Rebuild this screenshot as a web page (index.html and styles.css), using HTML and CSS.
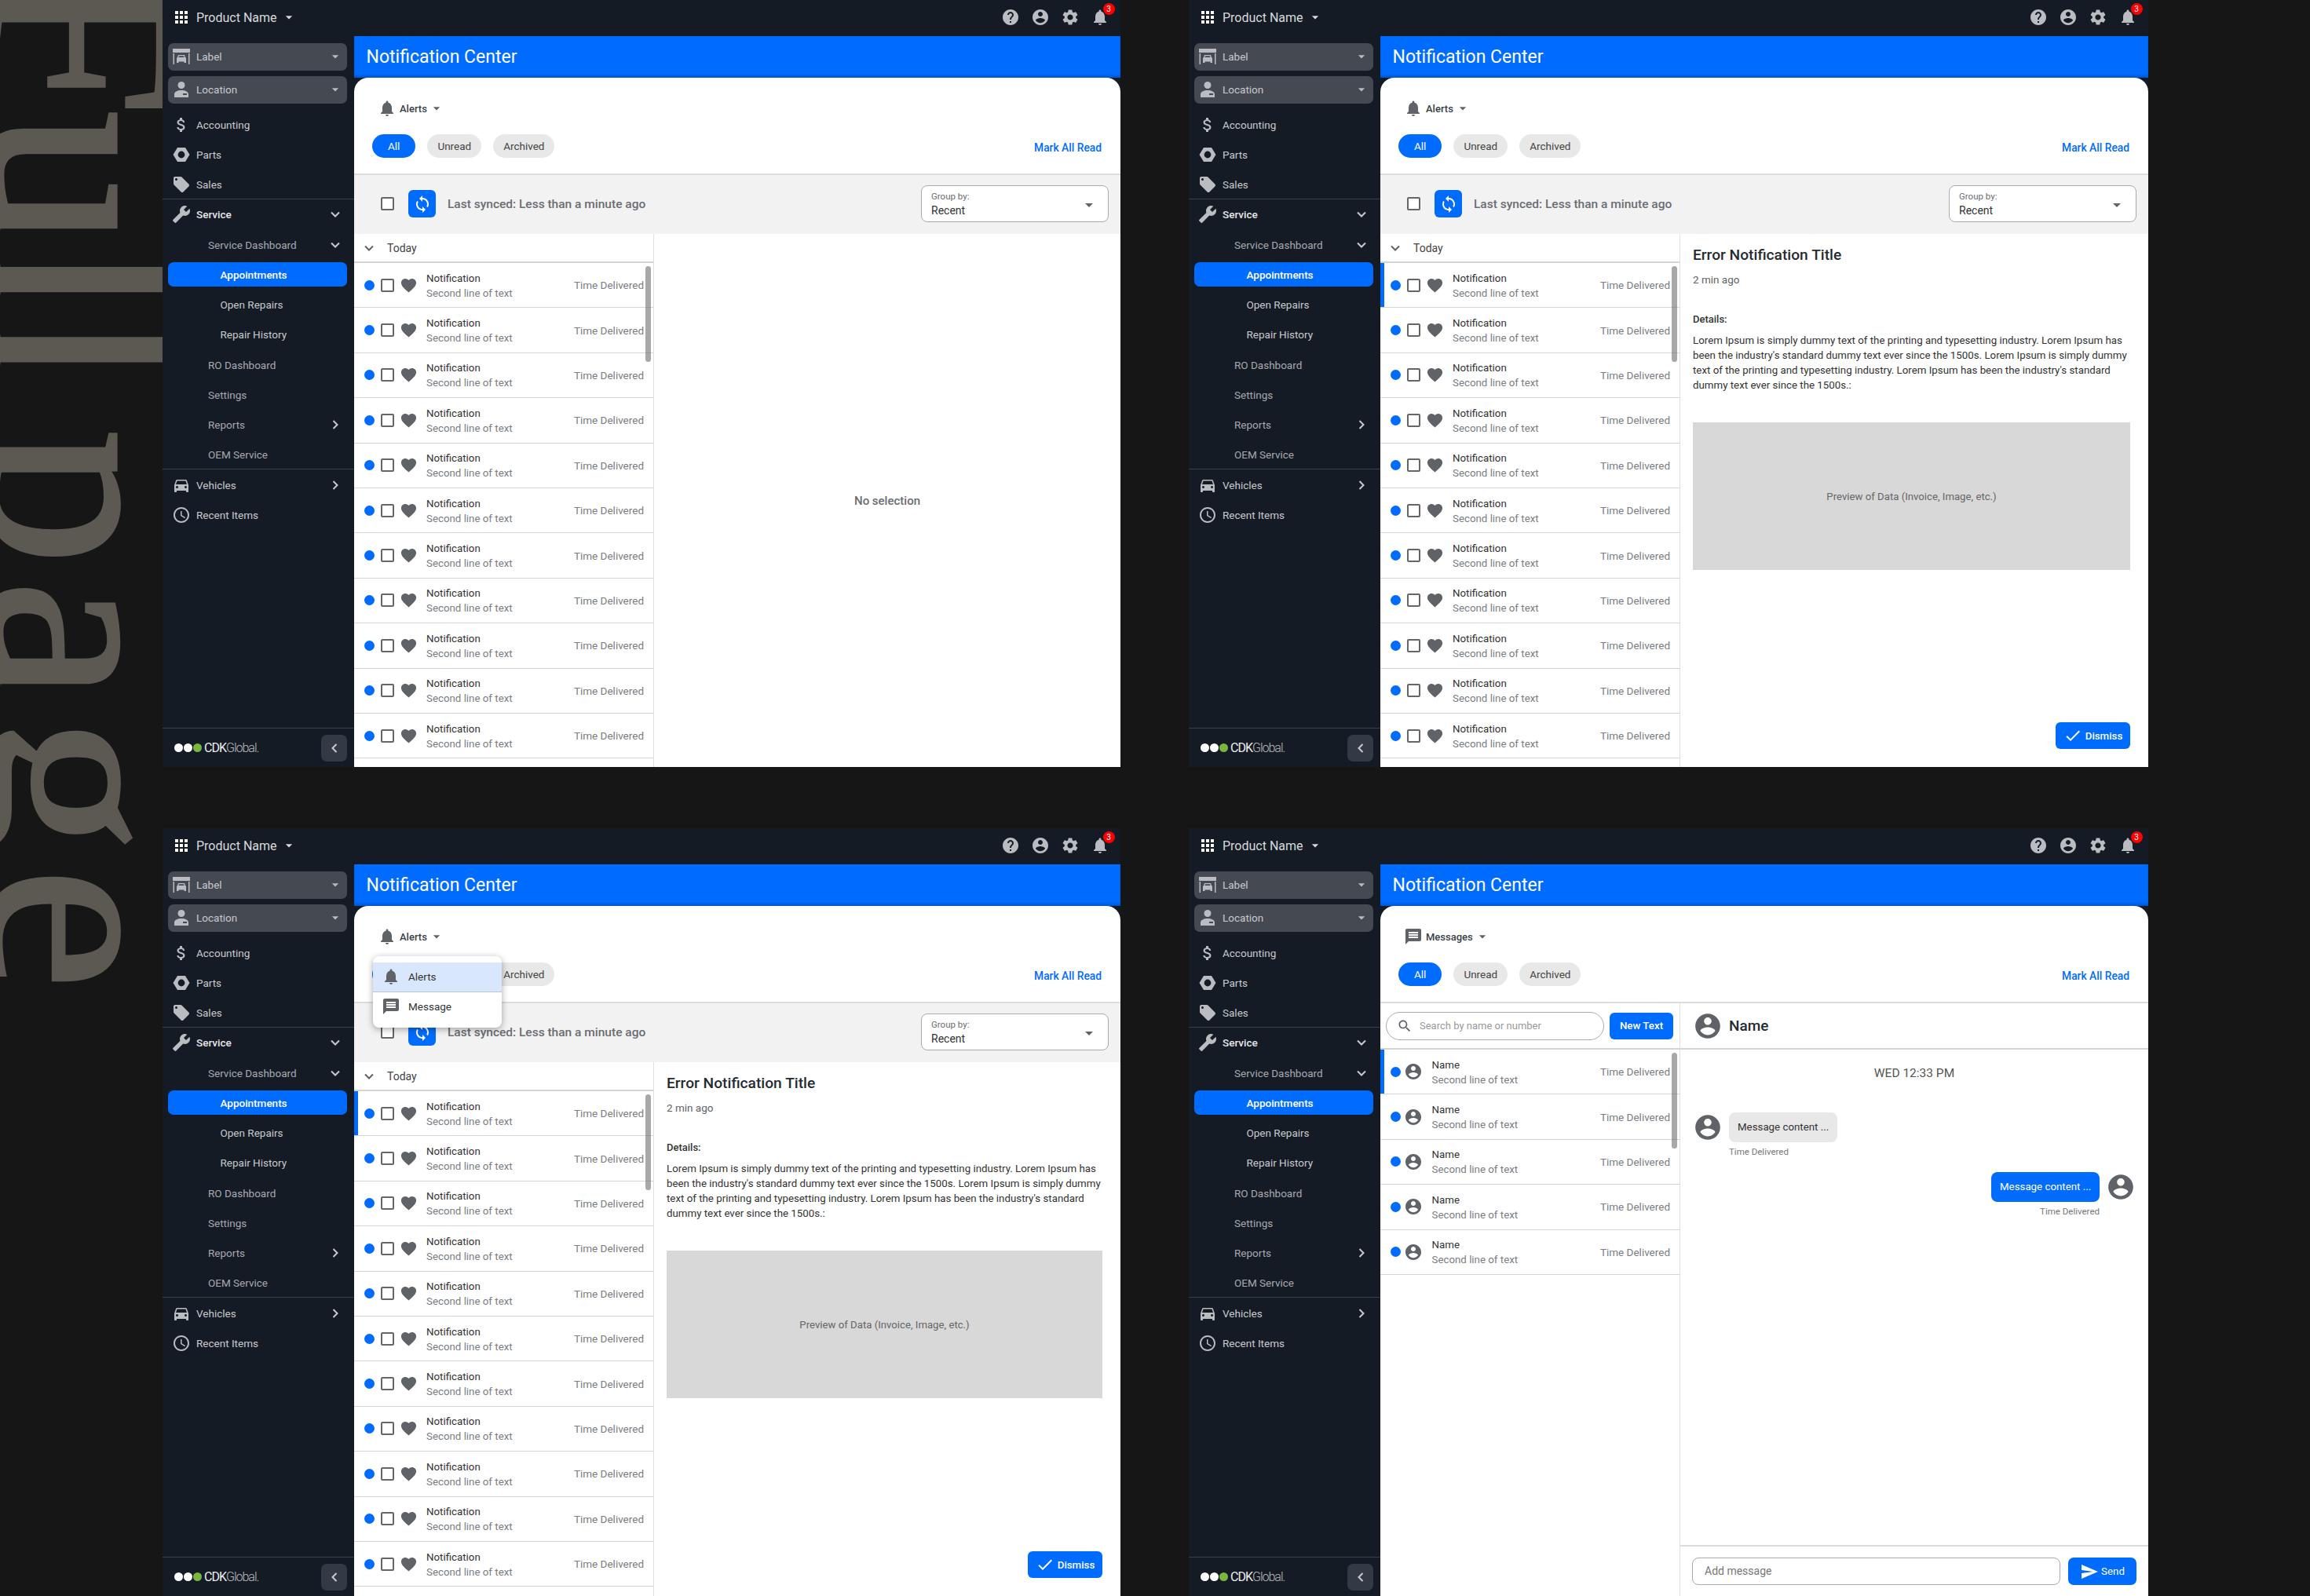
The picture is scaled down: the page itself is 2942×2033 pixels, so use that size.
FILE: index.html
```html
<!DOCTYPE html>
<html lang="en">
<head>
    <meta charset="UTF-8">
    <title>Notification Center - Full page</title>
    <link rel="stylesheet" href="styles.css">
</head>
<body>
    <svg class="icon-defs" xmlns="http://www.w3.org/2000/svg">
        <symbol id="i-apps" viewBox="0 0 24 24"><path d="M4 8h4V4H4v4zm6 12h4v-4h-4v4zm-6 0h4v-4H4v4zm0-6h4v-4H4v4zm6 0h4v-4h-4v4zm6-10v4h4V4h-4zm-6 4h4V4h-4v4zm6 6h4v-4h-4v4zm0 6h4v-4h-4v4z"/></symbol>
        <symbol id="i-caret" viewBox="0 0 24 24"><path d="M7 10l5 5 5-5z"/></symbol>
        <symbol id="i-down" viewBox="0 0 24 24"><path d="M6 9l6 6 6-6" fill="none" stroke="currentColor" stroke-width="2.4"/></symbol>
        <symbol id="i-right" viewBox="0 0 24 24"><path d="M9 6l6 6-6 6" fill="none" stroke="currentColor" stroke-width="2.4"/></symbol>
        <symbol id="i-left" viewBox="0 0 24 24"><path d="M15 6l-6 6 6 6" fill="none" stroke="currentColor" stroke-width="2.4"/></symbol>
        <symbol id="i-help" viewBox="0 0 24 24"><path d="M12 2C6.48 2 2 6.48 2 12s4.48 10 10 10 10-4.48 10-10S17.52 2 12 2zm1 17h-2v-2h2v2zm2.07-7.75l-.9.92C13.45 12.9 13 13.5 13 15h-2v-.5c0-1.1.45-2.1 1.17-2.83l1.24-1.26c.37-.36.59-.86.59-1.41 0-1.1-.9-2-2-2s-2 .9-2 2H8c0-2.21 1.79-4 4-4s4 1.79 4 4c0 .88-.36 1.68-.93 2.25z"/></symbol>
        <symbol id="i-account" viewBox="0 0 24 24"><path d="M12 2C6.48 2 2 6.48 2 12s4.48 10 10 10 10-4.48 10-10S17.52 2 12 2zm0 3c1.66 0 3 1.34 3 3s-1.34 3-3 3-3-1.34-3-3 1.34-3 3-3zm0 14.2c-2.5 0-4.71-1.28-6-3.22.03-1.99 4-3.08 6-3.08 1.99 0 5.97 1.09 6 3.08-1.29 1.94-3.5 3.22-6 3.22z"/></symbol>
        <symbol id="i-gear" viewBox="0 0 24 24"><path d="M19.14 12.94c.04-.3.06-.61.06-.94 0-.32-.02-.64-.07-.94l2.03-1.58c.18-.14.23-.41.12-.61l-1.92-3.32c-.12-.22-.37-.29-.59-.22l-2.39.96c-.5-.38-1.03-.7-1.62-.94l-.36-2.54c-.04-.24-.24-.41-.48-.41h-3.84c-.24 0-.43.17-.47.41l-.36 2.54c-.59.24-1.13.57-1.62.94l-2.39-.96c-.22-.08-.47 0-.59.22L2.74 8.87c-.12.21-.08.47.12.61l2.03 1.58c-.05.3-.09.63-.09.94s.02.64.07.94l-2.03 1.58c-.18.14-.23.41-.12.61l1.92 3.32c.12.22.37.29.59.22l2.39-.96c.5.38 1.03.7 1.62.94l.36 2.54c.05.24.24.41.48.41h3.84c.24 0 .44-.17.47-.41l.36-2.54c.59-.24 1.13-.56 1.62-.94l2.39.96c.22.08.47 0 .59-.22l1.92-3.32c.12-.22.07-.47-.12-.61l-2.01-1.58zM12 15.6c-1.98 0-3.6-1.62-3.6-3.6s1.62-3.6 3.6-3.6 3.6 1.62 3.6 3.6-1.62 3.6-3.6 3.6z"/></symbol>
        <symbol id="i-bell" viewBox="0 0 24 24"><path d="M12 22c1.1 0 2-.9 2-2h-4c0 1.1.89 2 2 2zm6-6v-5c0-3.07-1.64-5.64-4.5-6.32V4c0-.83-.67-1.5-1.5-1.5s-1.5.67-1.5 1.5v.68C7.63 5.36 6 7.92 6 11v5l-2 2v1h16v-1l-2-2z"/></symbol>
        <symbol id="i-store" viewBox="0 0 24 24"><path d="M1 2h22v5H1zM1.5 8H3v14H1.5zM21 8h1.5v14H21z"/><path d="M7 13l1-3h8l1 3 1 1v6h-2.5v-1.5h-7V20H6v-6zM8.4 13h7.2l-.6-1.7H9z" fill-rule="evenodd"/></symbol>
        <symbol id="i-person" viewBox="0 0 24 24"><circle cx="12" cy="6.5" r="4.5"/><path d="M3 22v-4c0-3 4-5 9-5s9 2 9 5v4zm11-5v2h5v-2z" fill-rule="evenodd"/></symbol>
        <symbol id="i-dollar" viewBox="0 0 24 24"><path d="M11.8 10.9c-2.27-.59-3-1.2-3-2.15 0-1.09 1.01-1.85 2.7-1.85 1.78 0 2.44.85 2.5 2.1h2.21c-.07-1.72-1.12-3.3-3.21-3.81V3h-3v2.16c-1.94.42-3.5 1.68-3.5 3.61 0 2.31 1.91 3.46 4.7 4.13 2.5.6 3 1.48 3 2.41 0 .69-.49 1.79-2.7 1.79-2.06 0-2.87-.92-2.98-2.1h-2.2c.12 2.19 1.76 3.42 3.68 3.83V21h3v-2.15c1.95-.37 3.5-1.5 3.5-3.55 0-2.84-2.43-3.81-4.7-4.4z"/></symbol>
        <symbol id="i-nut" viewBox="0 0 24 24"><path d="M7 3h10l5.5 9-5.5 9H7l-5.5-9zM12 7.6a4.4 4.4 0 1 0 0 8.8 4.4 4.4 0 0 0 0-8.8z" fill-rule="evenodd"/></symbol>
        <symbol id="i-tag" viewBox="0 0 24 24"><path d="M21.41 11.58l-9-9C12.05 2.22 11.55 2 11 2H4c-1.1 0-2 .9-2 2v7c0 .55.22 1.05.59 1.42l9 9c.36.36.86.58 1.41.58.55 0 1.05-.22 1.41-.59l7-7c.37-.36.59-.86.59-1.41 0-.55-.23-1.06-.59-1.42zM5.5 7C4.67 7 4 6.33 4 5.5S4.67 4 5.5 4 7 4.67 7 5.5 6.33 7 5.5 7z"/></symbol>
        <symbol id="i-wrench" viewBox="0 0 24 24"><path transform="matrix(-1 0 0 1 24 0)" d="M22.7 19l-9.1-9.1c.9-2.3.4-5-1.5-6.9-2-2-5-2.4-7.4-1.3L9 6 6 9 1.6 4.7C.4 7.1.9 10.1 2.9 12.1c1.9 1.9 4.6 2.4 6.9 1.5l9.1 9.1c.4.4 1 .4 1.4 0l2.3-2.3c.5-.4.5-1.1.1-1.4z"/></symbol>
        <symbol id="i-car" viewBox="0 0 24 24"><path d="M18.92 6.01C18.72 5.42 18.16 5 17.5 5h-11c-.66 0-1.21.42-1.42 1.01L3 12v8c0 .55.45 1 1 1h1c.55 0 1-.45 1-1v-1h12v1c0 .55.45 1 1 1h1c.55 0 1-.45 1-1v-8l-2.08-5.99zM6.5 16c-.83 0-1.5-.67-1.5-1.5S5.67 13 6.5 13s1.5.67 1.5 1.5S7.33 16 6.5 16zm11 0c-.83 0-1.5-.67-1.5-1.5s.67-1.5 1.5-1.5 1.5.67 1.5 1.5-.67 1.5-1.5 1.5zM5 11l1.5-4.5h11L19 11H5z"/></symbol>
        <symbol id="i-clock" viewBox="0 0 24 24"><path d="M11.99 2C6.47 2 2 6.48 2 12s4.47 10 9.99 10C17.52 22 22 17.52 22 12S17.52 2 11.99 2zM12 20c-4.42 0-8-3.58-8-8s3.58-8 8-8 8 3.58 8 8-3.58 8-8 8zm.5-13H11v6l5.25 3.15.75-1.23-4.5-2.67z"/></symbol>
        <symbol id="i-heart" viewBox="0 0 24 24"><path d="M12 21.35l-1.45-1.32C5.4 15.36 2 12.28 2 8.5 2 5.42 4.42 3 7.5 3c1.74 0 3.41.81 4.5 2.09C13.09 3.81 14.76 3 16.5 3 19.58 3 22 5.42 22 8.5c0 3.78-3.4 6.86-8.55 11.54L12 21.35z"/></symbol>
        <symbol id="i-sync" viewBox="0 0 24 24"><path d="M12 4V1L8 5l4 4V6c3.31 0 6 2.69 6 6 0 1.01-.25 1.97-.7 2.8l1.46 1.46C19.54 15.03 20 13.57 20 12c0-4.42-3.58-8-8-8zm0 14c-3.31 0-6-2.69-6-6 0-1.01.25-1.97.7-2.8L5.24 7.74C4.46 8.97 4 10.43 4 12c0 4.42 3.58 8 8 8v3l4-4-4-4v3z"/></symbol>
        <symbol id="i-chat" viewBox="0 0 24 24"><path d="M20 2H4c-1.1 0-2 .9-2 2v18l4-4h14c1.1 0 2-.9 2-2V4c0-1.1-.9-2-2-2zM6 6h12v2H6zm0 3h12v2H6zm0 3h12v2H6z" fill-rule="evenodd"/></symbol>
        <symbol id="i-check" viewBox="0 0 24 24"><path d="M9 16.17L4.83 12l-1.42 1.41L9 19 21 7l-1.41-1.41z"/></symbol>
        <symbol id="i-send" viewBox="0 0 24 24"><path d="M2.01 21L23 12 2.01 3 2 10l15 2-15 2z"/></symbol>
        <symbol id="i-search" viewBox="0 0 24 24"><path d="M15.5 14h-.79l-.28-.27C15.41 12.59 16 11.11 16 9.5 16 5.91 13.09 3 9.5 3S3 5.91 3 9.5 5.91 16 9.5 16c1.61 0 3.09-.59 4.23-1.57l.27.28v.79l5 4.99L20.49 19l-4.99-5zm-6 0C7.01 14 5 11.99 5 9.5S7.01 5 9.5 5 14 7.01 14 9.5 11.99 14 9.5 14z"/></symbol>
    </svg>

    <div class="deco"><div class="deco-text"><span>Full</span> <span class="deco-second">page</span></div></div>

    <div class="screens">

        <!-- no selection -->
        <section class="screen">
            <header class="topbar">
                <svg class="ic ic-apps"><use href="#i-apps"/></svg>
                <span class="product">Product Name</span>
                <svg class="ic-caret"><use href="#i-caret"/></svg>
                <div class="top-actions">
                    <svg class="ic"><use href="#i-help"/></svg>
                    <svg class="ic"><use href="#i-account"/></svg>
                    <svg class="ic"><use href="#i-gear"/></svg>
                    <div class="bell"><svg class="ic"><use href="#i-bell"/></svg><span class="badge">3</span></div>
                </div>
            </header>
            <nav class="sidebar">
                <div class="picker"><svg class="ic"><use href="#i-store"/></svg><span>Label</span><svg class="ic-caret"><use href="#i-caret"/></svg></div>
                <div class="picker"><svg class="ic"><use href="#i-person"/></svg><span>Location</span><svg class="ic-caret"><use href="#i-caret"/></svg></div>
                <div class="nav">
                    <div class="nav-item"><svg class="ic"><use href="#i-dollar"/></svg>Accounting</div>
                    <div class="nav-item"><svg class="ic"><use href="#i-nut"/></svg>Parts</div>
                    <div class="nav-item"><svg class="ic"><use href="#i-tag"/></svg>Sales</div>
                    <div class="nav-group">
                        <div class="nav-item open"><svg class="ic"><use href="#i-wrench"/></svg>Service<svg class="chev"><use href="#i-down"/></svg></div>
                        <div class="nav-item sub">Service Dashboard<svg class="chev"><use href="#i-down"/></svg></div>
                        <div class="nav-item active">Appointments</div>
                        <div class="nav-item subsub">Open Repairs</div>
                        <div class="nav-item subsub">Repair History</div>
                        <div class="nav-item sub">RO Dashboard</div>
                        <div class="nav-item sub">Settings</div>
                        <div class="nav-item sub">Reports<svg class="chev"><use href="#i-right"/></svg></div>
                        <div class="nav-item sub">OEM Service</div>
                    </div>
                    <div class="nav-group">
                        <div class="nav-item"><svg class="ic"><use href="#i-car"/></svg>Vehicles<svg class="chev"><use href="#i-right"/></svg></div>
                        <div class="nav-item"><svg class="ic"><use href="#i-clock"/></svg>Recent Items</div>
                    </div>
                </div>
                <div class="side-foot">
                    <div class="logo"><i></i><i></i><i class="green"></i><span class="logo-text">CDK<em>Global.</em></span></div>
                    <button class="collapse"><svg class="chev"><use href="#i-left"/></svg></button>
                </div>
            </nav>
            <main class="main">
                <h1 class="page-title">Notification Center</h1>
                <div class="card">
                    <div class="card-head">
                        <div class="kind"><svg class="ic"><use href="#i-bell"/></svg><span>Alerts</span><svg class="ic-caret"><use href="#i-caret"/></svg></div>
                        <div class="filters">
                            <span class="pill on">All</span><span class="pill">Unread</span><span class="pill">Archived</span>
                            <a class="mark-read">Mark All Read</a>
                        </div>
                    </div>
                    <div class="toolbar">
                        <span class="box"></span>
                        <span class="sync"><svg class="ic"><use href="#i-sync"/></svg></span>
                        <span class="synced">Last synced: Less than a minute ago</span>
                        <div class="group-by"><small>Group by:</small><span>Recent</span><svg class="ic-caret"><use href="#i-caret"/></svg></div>
                    </div>
                    <div class="split">
                        <div class="list">
                            <div class="today"><svg class="chev"><use href="#i-down"/></svg>Today</div>
                            <div class="rows">
                                <span class="thumb"></span>
                                <div class="row"><span class="dot"></span><span class="box"></span><svg class="heart"><use href="#i-heart"/></svg><div class="row-text"><b>Notification</b><span>Second line of text</span></div><time>Time Delivered</time></div>
                                <div class="row"><span class="dot"></span><span class="box"></span><svg class="heart"><use href="#i-heart"/></svg><div class="row-text"><b>Notification</b><span>Second line of text</span></div><time>Time Delivered</time></div>
                                <div class="row"><span class="dot"></span><span class="box"></span><svg class="heart"><use href="#i-heart"/></svg><div class="row-text"><b>Notification</b><span>Second line of text</span></div><time>Time Delivered</time></div>
                                <div class="row"><span class="dot"></span><span class="box"></span><svg class="heart"><use href="#i-heart"/></svg><div class="row-text"><b>Notification</b><span>Second line of text</span></div><time>Time Delivered</time></div>
                                <div class="row"><span class="dot"></span><span class="box"></span><svg class="heart"><use href="#i-heart"/></svg><div class="row-text"><b>Notification</b><span>Second line of text</span></div><time>Time Delivered</time></div>
                                <div class="row"><span class="dot"></span><span class="box"></span><svg class="heart"><use href="#i-heart"/></svg><div class="row-text"><b>Notification</b><span>Second line of text</span></div><time>Time Delivered</time></div>
                                <div class="row"><span class="dot"></span><span class="box"></span><svg class="heart"><use href="#i-heart"/></svg><div class="row-text"><b>Notification</b><span>Second line of text</span></div><time>Time Delivered</time></div>
                                <div class="row"><span class="dot"></span><span class="box"></span><svg class="heart"><use href="#i-heart"/></svg><div class="row-text"><b>Notification</b><span>Second line of text</span></div><time>Time Delivered</time></div>
                                <div class="row"><span class="dot"></span><span class="box"></span><svg class="heart"><use href="#i-heart"/></svg><div class="row-text"><b>Notification</b><span>Second line of text</span></div><time>Time Delivered</time></div>
                                <div class="row"><span class="dot"></span><span class="box"></span><svg class="heart"><use href="#i-heart"/></svg><div class="row-text"><b>Notification</b><span>Second line of text</span></div><time>Time Delivered</time></div>
                                <div class="row"><span class="dot"></span><span class="box"></span><svg class="heart"><use href="#i-heart"/></svg><div class="row-text"><b>Notification</b><span>Second line of text</span></div><time>Time Delivered</time></div>
                            </div>
                        </div>
                        <div class="no-selection">No selection</div>
                    </div>
                </div>
            </main>
        </section>

        <!-- detail open -->
        <section class="screen">
            <header class="topbar">
                <svg class="ic ic-apps"><use href="#i-apps"/></svg>
                <span class="product">Product Name</span>
                <svg class="ic-caret"><use href="#i-caret"/></svg>
                <div class="top-actions">
                    <svg class="ic"><use href="#i-help"/></svg>
                    <svg class="ic"><use href="#i-account"/></svg>
                    <svg class="ic"><use href="#i-gear"/></svg>
                    <div class="bell"><svg class="ic"><use href="#i-bell"/></svg><span class="badge">3</span></div>
                </div>
            </header>
            <nav class="sidebar">
                <div class="picker"><svg class="ic"><use href="#i-store"/></svg><span>Label</span><svg class="ic-caret"><use href="#i-caret"/></svg></div>
                <div class="picker"><svg class="ic"><use href="#i-person"/></svg><span>Location</span><svg class="ic-caret"><use href="#i-caret"/></svg></div>
                <div class="nav">
                    <div class="nav-item"><svg class="ic"><use href="#i-dollar"/></svg>Accounting</div>
                    <div class="nav-item"><svg class="ic"><use href="#i-nut"/></svg>Parts</div>
                    <div class="nav-item"><svg class="ic"><use href="#i-tag"/></svg>Sales</div>
                    <div class="nav-group">
                        <div class="nav-item open"><svg class="ic"><use href="#i-wrench"/></svg>Service<svg class="chev"><use href="#i-down"/></svg></div>
                        <div class="nav-item sub">Service Dashboard<svg class="chev"><use href="#i-down"/></svg></div>
                        <div class="nav-item active">Appointments</div>
                        <div class="nav-item subsub">Open Repairs</div>
                        <div class="nav-item subsub">Repair History</div>
                        <div class="nav-item sub">RO Dashboard</div>
                        <div class="nav-item sub">Settings</div>
                        <div class="nav-item sub">Reports<svg class="chev"><use href="#i-right"/></svg></div>
                        <div class="nav-item sub">OEM Service</div>
                    </div>
                    <div class="nav-group">
                        <div class="nav-item"><svg class="ic"><use href="#i-car"/></svg>Vehicles<svg class="chev"><use href="#i-right"/></svg></div>
                        <div class="nav-item"><svg class="ic"><use href="#i-clock"/></svg>Recent Items</div>
                    </div>
                </div>
                <div class="side-foot">
                    <div class="logo"><i></i><i></i><i class="green"></i><span class="logo-text">CDK<em>Global.</em></span></div>
                    <button class="collapse"><svg class="chev"><use href="#i-left"/></svg></button>
                </div>
            </nav>
            <main class="main">
                <h1 class="page-title">Notification Center</h1>
                <div class="card">
                    <div class="card-head">
                        <div class="kind"><svg class="ic"><use href="#i-bell"/></svg><span>Alerts</span><svg class="ic-caret"><use href="#i-caret"/></svg></div>
                        <div class="filters">
                            <span class="pill on">All</span><span class="pill">Unread</span><span class="pill">Archived</span>
                            <a class="mark-read">Mark All Read</a>
                        </div>
                    </div>
                    <div class="toolbar">
                        <span class="box"></span>
                        <span class="sync"><svg class="ic"><use href="#i-sync"/></svg></span>
                        <span class="synced">Last synced: Less than a minute ago</span>
                        <div class="group-by"><small>Group by:</small><span>Recent</span><svg class="ic-caret"><use href="#i-caret"/></svg></div>
                    </div>
                    <div class="split">
                        <div class="list">
                            <div class="today"><svg class="chev"><use href="#i-down"/></svg>Today</div>
                            <div class="rows">
                                <span class="thumb"></span>
                                <div class="row selected"><span class="dot"></span><span class="box"></span><svg class="heart"><use href="#i-heart"/></svg><div class="row-text"><b>Notification</b><span>Second line of text</span></div><time>Time Delivered</time></div>
                                <div class="row"><span class="dot"></span><span class="box"></span><svg class="heart"><use href="#i-heart"/></svg><div class="row-text"><b>Notification</b><span>Second line of text</span></div><time>Time Delivered</time></div>
                                <div class="row"><span class="dot"></span><span class="box"></span><svg class="heart"><use href="#i-heart"/></svg><div class="row-text"><b>Notification</b><span>Second line of text</span></div><time>Time Delivered</time></div>
                                <div class="row"><span class="dot"></span><span class="box"></span><svg class="heart"><use href="#i-heart"/></svg><div class="row-text"><b>Notification</b><span>Second line of text</span></div><time>Time Delivered</time></div>
                                <div class="row"><span class="dot"></span><span class="box"></span><svg class="heart"><use href="#i-heart"/></svg><div class="row-text"><b>Notification</b><span>Second line of text</span></div><time>Time Delivered</time></div>
                                <div class="row"><span class="dot"></span><span class="box"></span><svg class="heart"><use href="#i-heart"/></svg><div class="row-text"><b>Notification</b><span>Second line of text</span></div><time>Time Delivered</time></div>
                                <div class="row"><span class="dot"></span><span class="box"></span><svg class="heart"><use href="#i-heart"/></svg><div class="row-text"><b>Notification</b><span>Second line of text</span></div><time>Time Delivered</time></div>
                                <div class="row"><span class="dot"></span><span class="box"></span><svg class="heart"><use href="#i-heart"/></svg><div class="row-text"><b>Notification</b><span>Second line of text</span></div><time>Time Delivered</time></div>
                                <div class="row"><span class="dot"></span><span class="box"></span><svg class="heart"><use href="#i-heart"/></svg><div class="row-text"><b>Notification</b><span>Second line of text</span></div><time>Time Delivered</time></div>
                                <div class="row"><span class="dot"></span><span class="box"></span><svg class="heart"><use href="#i-heart"/></svg><div class="row-text"><b>Notification</b><span>Second line of text</span></div><time>Time Delivered</time></div>
                                <div class="row"><span class="dot"></span><span class="box"></span><svg class="heart"><use href="#i-heart"/></svg><div class="row-text"><b>Notification</b><span>Second line of text</span></div><time>Time Delivered</time></div>
                            </div>
                        </div>
                        <div class="detail">
                            <h2>Error Notification Title</h2>
                            <p class="ago">2 min ago</p>
                            <h3>Details:</h3>
                            <p class="body-text">Lorem Ipsum is simply dummy text of the printing and typesetting industry. Lorem Ipsum has been the industry's standard dummy text ever since the 1500s. Lorem Ipsum is simply dummy text of the printing and typesetting industry. Lorem Ipsum has been the industry's standard dummy text ever since the 1500s.:</p>
                            <div class="preview">Preview of Data (Invoice, Image, etc.)</div>
                            <button class="btn dismiss"><svg class="ic"><use href="#i-check"/></svg>Dismiss</button>
                        </div>
                    </div>
                </div>
            </main>
        </section>

        <!-- kind menu open -->
        <section class="screen tall">
            <header class="topbar">
                <svg class="ic ic-apps"><use href="#i-apps"/></svg>
                <span class="product">Product Name</span>
                <svg class="ic-caret"><use href="#i-caret"/></svg>
                <div class="top-actions">
                    <svg class="ic"><use href="#i-help"/></svg>
                    <svg class="ic"><use href="#i-account"/></svg>
                    <svg class="ic"><use href="#i-gear"/></svg>
                    <div class="bell"><svg class="ic"><use href="#i-bell"/></svg><span class="badge">3</span></div>
                </div>
            </header>
            <nav class="sidebar">
                <div class="picker"><svg class="ic"><use href="#i-store"/></svg><span>Label</span><svg class="ic-caret"><use href="#i-caret"/></svg></div>
                <div class="picker"><svg class="ic"><use href="#i-person"/></svg><span>Location</span><svg class="ic-caret"><use href="#i-caret"/></svg></div>
                <div class="nav">
                    <div class="nav-item"><svg class="ic"><use href="#i-dollar"/></svg>Accounting</div>
                    <div class="nav-item"><svg class="ic"><use href="#i-nut"/></svg>Parts</div>
                    <div class="nav-item"><svg class="ic"><use href="#i-tag"/></svg>Sales</div>
                    <div class="nav-group">
                        <div class="nav-item open"><svg class="ic"><use href="#i-wrench"/></svg>Service<svg class="chev"><use href="#i-down"/></svg></div>
                        <div class="nav-item sub">Service Dashboard<svg class="chev"><use href="#i-down"/></svg></div>
                        <div class="nav-item active">Appointments</div>
                        <div class="nav-item subsub">Open Repairs</div>
                        <div class="nav-item subsub">Repair History</div>
                        <div class="nav-item sub">RO Dashboard</div>
                        <div class="nav-item sub">Settings</div>
                        <div class="nav-item sub">Reports<svg class="chev"><use href="#i-right"/></svg></div>
                        <div class="nav-item sub">OEM Service</div>
                    </div>
                    <div class="nav-group">
                        <div class="nav-item"><svg class="ic"><use href="#i-car"/></svg>Vehicles<svg class="chev"><use href="#i-right"/></svg></div>
                        <div class="nav-item"><svg class="ic"><use href="#i-clock"/></svg>Recent Items</div>
                    </div>
                </div>
                <div class="side-foot">
                    <div class="logo"><i></i><i></i><i class="green"></i><span class="logo-text">CDK<em>Global.</em></span></div>
                    <button class="collapse"><svg class="chev"><use href="#i-left"/></svg></button>
                </div>
            </nav>
            <main class="main">
                <h1 class="page-title">Notification Center</h1>
                <div class="card">
                    <div class="card-head">
                        <div class="kind"><svg class="ic"><use href="#i-bell"/></svg><span>Alerts</span><svg class="ic-caret"><use href="#i-caret"/></svg></div>
                        <div class="filters">
                            <span class="pill on">All</span><span class="pill">Unread</span><span class="pill">Archived</span>
                            <a class="mark-read">Mark All Read</a>
                        </div>
                    </div>
                    <div class="kind-menu">
                        <div class="kind-option on"><svg class="ic"><use href="#i-bell"/></svg>Alerts</div>
                        <div class="kind-option"><svg class="ic"><use href="#i-chat"/></svg>Message</div>
                    </div>
                    <div class="toolbar">
                        <span class="box"></span>
                        <span class="sync"><svg class="ic"><use href="#i-sync"/></svg></span>
                        <span class="synced">Last synced: Less than a minute ago</span>
                        <div class="group-by"><small>Group by:</small><span>Recent</span><svg class="ic-caret"><use href="#i-caret"/></svg></div>
                    </div>
                    <div class="split">
                        <div class="list">
                            <div class="today"><svg class="chev"><use href="#i-down"/></svg>Today</div>
                            <div class="rows">
                                <span class="thumb"></span>
                                <div class="row selected"><span class="dot"></span><span class="box"></span><svg class="heart"><use href="#i-heart"/></svg><div class="row-text"><b>Notification</b><span>Second line of text</span></div><time>Time Delivered</time></div>
                                <div class="row"><span class="dot"></span><span class="box"></span><svg class="heart"><use href="#i-heart"/></svg><div class="row-text"><b>Notification</b><span>Second line of text</span></div><time>Time Delivered</time></div>
                                <div class="row"><span class="dot"></span><span class="box"></span><svg class="heart"><use href="#i-heart"/></svg><div class="row-text"><b>Notification</b><span>Second line of text</span></div><time>Time Delivered</time></div>
                                <div class="row"><span class="dot"></span><span class="box"></span><svg class="heart"><use href="#i-heart"/></svg><div class="row-text"><b>Notification</b><span>Second line of text</span></div><time>Time Delivered</time></div>
                                <div class="row"><span class="dot"></span><span class="box"></span><svg class="heart"><use href="#i-heart"/></svg><div class="row-text"><b>Notification</b><span>Second line of text</span></div><time>Time Delivered</time></div>
                                <div class="row"><span class="dot"></span><span class="box"></span><svg class="heart"><use href="#i-heart"/></svg><div class="row-text"><b>Notification</b><span>Second line of text</span></div><time>Time Delivered</time></div>
                                <div class="row"><span class="dot"></span><span class="box"></span><svg class="heart"><use href="#i-heart"/></svg><div class="row-text"><b>Notification</b><span>Second line of text</span></div><time>Time Delivered</time></div>
                                <div class="row"><span class="dot"></span><span class="box"></span><svg class="heart"><use href="#i-heart"/></svg><div class="row-text"><b>Notification</b><span>Second line of text</span></div><time>Time Delivered</time></div>
                                <div class="row"><span class="dot"></span><span class="box"></span><svg class="heart"><use href="#i-heart"/></svg><div class="row-text"><b>Notification</b><span>Second line of text</span></div><time>Time Delivered</time></div>
                                <div class="row"><span class="dot"></span><span class="box"></span><svg class="heart"><use href="#i-heart"/></svg><div class="row-text"><b>Notification</b><span>Second line of text</span></div><time>Time Delivered</time></div>
                                <div class="row"><span class="dot"></span><span class="box"></span><svg class="heart"><use href="#i-heart"/></svg><div class="row-text"><b>Notification</b><span>Second line of text</span></div><time>Time Delivered</time></div>
                            </div>
                        </div>
                        <div class="detail">
                            <h2>Error Notification Title</h2>
                            <p class="ago">2 min ago</p>
                            <h3>Details:</h3>
                            <p class="body-text">Lorem Ipsum is simply dummy text of the printing and typesetting industry. Lorem Ipsum has been the industry's standard dummy text ever since the 1500s. Lorem Ipsum is simply dummy text of the printing and typesetting industry. Lorem Ipsum has been the industry's standard dummy text ever since the 1500s.:</p>
                            <div class="preview">Preview of Data (Invoice, Image, etc.)</div>
                            <button class="btn dismiss"><svg class="ic"><use href="#i-check"/></svg>Dismiss</button>
                        </div>
                    </div>
                </div>
            </main>
        </section>

        <!-- messages -->
        <section class="screen tall">
            <header class="topbar">
                <svg class="ic ic-apps"><use href="#i-apps"/></svg>
                <span class="product">Product Name</span>
                <svg class="ic-caret"><use href="#i-caret"/></svg>
                <div class="top-actions">
                    <svg class="ic"><use href="#i-help"/></svg>
                    <svg class="ic"><use href="#i-account"/></svg>
                    <svg class="ic"><use href="#i-gear"/></svg>
                    <div class="bell"><svg class="ic"><use href="#i-bell"/></svg><span class="badge">3</span></div>
                </div>
            </header>
            <nav class="sidebar">
                <div class="picker"><svg class="ic"><use href="#i-store"/></svg><span>Label</span><svg class="ic-caret"><use href="#i-caret"/></svg></div>
                <div class="picker"><svg class="ic"><use href="#i-person"/></svg><span>Location</span><svg class="ic-caret"><use href="#i-caret"/></svg></div>
                <div class="nav">
                    <div class="nav-item"><svg class="ic"><use href="#i-dollar"/></svg>Accounting</div>
                    <div class="nav-item"><svg class="ic"><use href="#i-nut"/></svg>Parts</div>
                    <div class="nav-item"><svg class="ic"><use href="#i-tag"/></svg>Sales</div>
                    <div class="nav-group">
                        <div class="nav-item open"><svg class="ic"><use href="#i-wrench"/></svg>Service<svg class="chev"><use href="#i-down"/></svg></div>
                        <div class="nav-item sub">Service Dashboard<svg class="chev"><use href="#i-down"/></svg></div>
                        <div class="nav-item active">Appointments</div>
                        <div class="nav-item subsub">Open Repairs</div>
                        <div class="nav-item subsub">Repair History</div>
                        <div class="nav-item sub">RO Dashboard</div>
                        <div class="nav-item sub">Settings</div>
                        <div class="nav-item sub">Reports<svg class="chev"><use href="#i-right"/></svg></div>
                        <div class="nav-item sub">OEM Service</div>
                    </div>
                    <div class="nav-group">
                        <div class="nav-item"><svg class="ic"><use href="#i-car"/></svg>Vehicles<svg class="chev"><use href="#i-right"/></svg></div>
                        <div class="nav-item"><svg class="ic"><use href="#i-clock"/></svg>Recent Items</div>
                    </div>
                </div>
                <div class="side-foot">
                    <div class="logo"><i></i><i></i><i class="green"></i><span class="logo-text">CDK<em>Global.</em></span></div>
                    <button class="collapse"><svg class="chev"><use href="#i-left"/></svg></button>
                </div>
            </nav>
            <main class="main">
                <h1 class="page-title">Notification Center</h1>
                <div class="card">
                    <div class="card-head">
                        <div class="kind"><svg class="ic"><use href="#i-chat"/></svg><span>Messages</span><svg class="ic-caret"><use href="#i-caret"/></svg></div>
                        <div class="filters">
                            <span class="pill on">All</span><span class="pill">Unread</span><span class="pill">Archived</span>
                            <a class="mark-read">Mark All Read</a>
                        </div>
                    </div>
                    <div class="split with-line">
                        <div class="list">
                            <div class="search-row">
                                <div class="search"><svg class="ic"><use href="#i-search"/></svg>Search by name or number</div>
                                <button class="btn new-text">New Text</button>
                            </div>
                            <div class="rows">
                                <span class="thumb"></span>
                                <div class="row selected"><span class="dot"></span><svg class="row-avatar"><use href="#i-account"/></svg><div class="row-text"><b>Name</b><span>Second line of text</span></div><time>Time Delivered</time></div>
                                <div class="row"><span class="dot"></span><svg class="row-avatar"><use href="#i-account"/></svg><div class="row-text"><b>Name</b><span>Second line of text</span></div><time>Time Delivered</time></div>
                                <div class="row"><span class="dot"></span><svg class="row-avatar"><use href="#i-account"/></svg><div class="row-text"><b>Name</b><span>Second line of text</span></div><time>Time Delivered</time></div>
                                <div class="row"><span class="dot"></span><svg class="row-avatar"><use href="#i-account"/></svg><div class="row-text"><b>Name</b><span>Second line of text</span></div><time>Time Delivered</time></div>
                                <div class="row"><span class="dot"></span><svg class="row-avatar"><use href="#i-account"/></svg><div class="row-text"><b>Name</b><span>Second line of text</span></div><time>Time Delivered</time></div>
                            </div>
                        </div>
                        <div class="chat">
                            <div class="chat-head"><svg class="avatar"><use href="#i-account"/></svg>Name</div>
                            <div class="chat-body">
                                <div class="chat-date">WED 12:33 PM</div>
                                <div class="msg"><svg class="avatar"><use href="#i-account"/></svg><div class="bubble">Message content ...</div></div>
                                <div class="msg-time">Time Delivered</div>
                                <div class="msg out"><div class="bubble">Message content ...</div><svg class="avatar"><use href="#i-account"/></svg></div>
                                <div class="msg-time out">Time Delivered</div>
                            </div>
                            <div class="composer">
                                <div class="add-message">Add message</div>
                                <button class="btn send"><svg class="ic"><use href="#i-send"/></svg>Send</button>
                            </div>
                        </div>
                    </div>
                </div>
            </main>
        </section>

    </div>
</body>
</html>
```
FILE: styles.css
```css
* {
    box-sizing: border-box;
}
body {
    margin: 0;
    width: 2942px;
    height: 2033px;
    display: flex;
    overflow: hidden;
    background-color: #161616;
    font-family: Roboto, "Liberation Sans", sans-serif;
    font-size: 14px;
    color: #333;
}
h1, h2, h3, p {
    margin: 0;
}
button {
    border: 0;
    font: inherit;
}
.icon-defs {
    display: none;
}

/* big rotated word on the left */
.deco {
    flex: 0 0 207px;
    height: 2033px;
    overflow: hidden;
}
.deco-text {
    writing-mode: vertical-rl;
    width: 350px;
    height: 2079px;
    margin-top: -46px;
    margin-left: -70px;
    font-family: "Liberation Serif", serif;
    font-size: 350px;
    line-height: 350px;
    letter-spacing: -8px;
    word-spacing: -20px;
    white-space: nowrap;
    color: #5c5852;
    -webkit-text-stroke: 4px #5c5852;
}
.deco-second {
    letter-spacing: 18px;
}

.screens {
    display: grid;
    grid-template-columns: 1220px 1222px;
    grid-template-rows: 977px 978px;
    gap: 78px 87px;
}
.screen {
    display: grid;
    grid-template-columns: 244px 1fr;
    grid-template-rows: 46px 1fr;
    min-height: 0;
    overflow: hidden;
    background-color: #151b25;
}

/* icons */
.ic {
    width: 24px;
    height: 24px;
    flex: none;
    fill: #b9bcc1;
}
.ic-caret {
    width: 20px;
    height: 20px;
    flex: none;
    fill: #b9bcc1;
}
.chev {
    width: 20px;
    height: 20px;
    flex: none;
    color: #c8cacd;
}

/* top bar */
.topbar {
    grid-column: 1 / 3;
    display: flex;
    align-items: center;
    padding: 0 14px 2px 12px;
}
.ic-apps {
    fill: #fff;
}
.product {
    margin-left: 7px;
    font-size: 16px;
    color: #d8d9db;
}
.topbar .ic-caret {
    margin-left: 5px;
    fill: #d8d9db;
}
.top-actions {
    margin-left: auto;
    display: flex;
    gap: 14px;
}
.bell {
    position: relative;
    height: 24px;
}
.badge {
    position: absolute;
    top: -6.5px;
    right: -6.5px;
    width: 15px;
    height: 15px;
    border-radius: 50%;
    background-color: #f00;
    color: #fff;
    font-size: 10px;
    line-height: 15px;
    text-align: center;
}

/* sidebar */
.sidebar {
    display: flex;
    flex-direction: column;
    min-height: 0;
    font-size: 13.5px;
    color: #c8cacd;
}
.picker {
    display: flex;
    align-items: center;
    height: 35px;
    margin: 9px 9px 0 7px;
    padding: 0 5px 1px;
    gap: 7px;
    border-radius: 7px;
    background-color: #444952;
}
.picker + .picker {
    margin-top: 7px;
}
.picker .ic-caret {
    margin-left: auto;
}
.nav {
    padding-top: 7.5px;
}
.nav-item {
    display: flex;
    align-items: center;
    height: 38.25px;
    padding-left: 12px;
    padding-right: 14px;
    gap: 7px;
}
.nav-item .chev {
    margin-left: auto;
}
.nav-group {
    border-top: 1px solid #3a404b;
    margin-top: -1px;
}
.nav-item.open {
    color: #e6e7e9;
    font-weight: 500;
}
.nav-item.sub {
    padding-left: 58px;
    color: #a6a9af;
}
.nav-item.subsub {
    padding-left: 73.5px;
}
.nav-item.active {
    height: 31px;
    margin: 3.6px 9px 3.6px 7px;
    padding-left: 66.5px;
    border-radius: 7px;
    background-color: #006cff;
    color: #fff;
    font-weight: 500;
}
.side-foot {
    margin-top: auto;
    height: 50px;
    display: flex;
    align-items: center;
    justify-content: space-between;
    padding: 0 9px 0 15px;
    border-top: 1px solid #3a404b;
}
.logo {
    display: flex;
    align-items: center;
    gap: 1px;
}
.logo i {
    width: 11px;
    height: 11px;
    border-radius: 50%;
    background-color: #fff;
}
.logo .green {
    background-color: #7ab73d;
}
.logo-text {
    margin-left: 2px;
    font-size: 16px;
    letter-spacing: -1px;
    color: #eee;
}
.logo-text em {
    font-style: normal;
    font-weight: 300;
    color: #bbb;
}
.collapse {
    width: 33px;
    height: 34px;
    padding: 7px 6px;
    border-radius: 7px;
    background-color: #343a45;
}

/* main */
.main {
    display: flex;
    flex-direction: column;
    min-height: 0;
    min-width: 0;
}
.page-title {
    height: 53px;
    padding-left: 15.5px;
    background-color: #006cff;
    box-shadow: inset 0 -3px 3px rgba(0, 0, 0, 0.18);
    color: #fff;
    font-size: 23px;
    font-weight: 400;
    line-height: 54px;
}
.card {
    position: relative;
    flex: 1;
    min-height: 0;
    display: flex;
    flex-direction: column;
    border-radius: 18px 18px 0 0;
    overflow: hidden;
    background-color: #fff;
}
.card-head {
    height: 122px;
    padding-top: 27px;
    flex: none;
}
.kind {
    display: flex;
    align-items: center;
    height: 24px;
    padding-left: 30px;
    font-size: 13px;
    font-weight: 500;
    color: #3a3f47;
}
.kind span {
    margin-left: 4px;
}
.kind .ic {
    fill: #5f6368;
}
.kind .ic-caret {
    margin-left: 2px;
    fill: #5f6368;
}
.filters {
    display: flex;
    align-items: center;
    gap: 15px;
    height: 30px;
    margin-top: 21px;
    padding: 0 24px 0 23px;
    font-size: 13.5px;
}
.pill {
    height: 30px;
    padding: 0 13px;
    border-radius: 15px;
    background-color: #e8e8e8;
    color: #444;
    line-height: 30px;
}
.pill:first-child {
    padding: 0 20px;
}
.pill.on {
    background-color: #006cff;
    color: #fff;
}
.mark-read {
    margin-left: auto;
    padding-top: 4px;
    font-size: 13.8px;
    color: #006cff;
    font-weight: 500;
}

/* toolbar */
.toolbar {
    flex: none;
    display: flex;
    align-items: center;
    height: 77px;
    padding: 0 15px 2px 34px;
    border-top: 2px solid #dcdcdc;
    background-color: #f2f2f2;
}
.box {
    flex: none;
    width: 17px;
    height: 17px;
    border: 2px solid #666;
    border-radius: 2px;
    background-color: #fff;
}
.sync {
    display: flex;
    align-items: center;
    justify-content: center;
    width: 35px;
    height: 35px;
    margin-left: 18px;
    border-radius: 6px;
    background-color: #006cff;
}
.sync .ic {
    fill: #fff;
}
.synced {
    margin-left: 15px;
    font-size: 15.5px;
    font-weight: 500;
    color: #6a6d72;
}
.group-by {
    position: relative;
    margin-left: auto;
    width: 239px;
    height: 47px;
    padding: 5px 12px;
    border: 1px solid #aaa;
    border-radius: 8px;
    background-color: #fff;
    display: flex;
    flex-direction: column;
}
.group-by small {
    font-size: 11.5px;
    line-height: 16px;
    color: #6a6d72;
}
.group-by span {
    font-size: 14px;
    line-height: 20px;
}
.group-by .ic-caret {
    position: absolute;
    right: 12px;
    top: 12px;
    width: 24px;
    height: 24px;
    fill: #5f6368;
}

/* list and detail */
.split {
    flex: 1;
    min-height: 0;
    display: flex;
}
.split.with-line {
    border-top: 2px solid #dcdcdc;
}
.list {
    flex: 0 0 382px;
    border-right: 1px solid #e0e0e0;
}
.today {
    display: flex;
    align-items: center;
    height: 37px;
    padding-left: 9px;
    gap: 13px;
    border-bottom: 2px solid #d4d4d4;
    color: #444;
}
.today .chev {
    color: #5f6368;
}
.rows {
    position: relative;
}
.thumb {
    position: absolute;
    top: 4px;
    right: 3px;
    width: 7px;
    height: 122px;
    border-radius: 4px;
    background-color: rgba(110, 110, 110, 0.6);
}
.row {
    display: flex;
    align-items: center;
    height: 57.4px;
    padding: 0 12px 0 12.5px;
    border-bottom: 1px solid #d4d4d4;
}
.row.selected {
    box-shadow: inset 5px 0 0 #006cff;
}
.dot {
    flex: none;
    width: 13px;
    height: 13px;
    border-radius: 50%;
    background-color: #006cff;
}
.row .box {
    margin-left: 8.5px;
}
.heart {
    flex: none;
    width: 23px;
    height: 23px;
    margin-left: 6.5px;
    fill: #5f6368;
}
.row-avatar {
    flex: none;
    width: 24px;
    height: 24px;
    margin-left: 4.5px;
    fill: #5f6368;
}
.row-text {
    margin-left: 11.5px;
    padding-top: 2px;
    display: flex;
    flex-direction: column;
    gap: 1px;
}
.row-text b {
    font-weight: 400;
    font-size: 13.3px;
    line-height: 18px;
    color: #333;
}
.row-text span {
    font-size: 13.3px;
    line-height: 18px;
    color: #7a7d82;
}
.row time {
    margin-left: auto;
    font-size: 13.5px;
    color: #7a7d82;
}
.no-selection {
    flex: 1;
    display: flex;
    align-items: center;
    justify-content: center;
    font-size: 15px;
    font-weight: 500;
    color: #6a6d72;
}
.detail {
    flex: 1;
    display: flex;
    flex-direction: column;
    padding: 15px 23px 23px 16px;
}
.detail h2 {
    font-size: 19.2px;
    font-weight: 500;
    line-height: 24px;
    color: #252a31;
}
.ago {
    margin-top: 9.5px;
    line-height: 18px;
    font-size: 13.5px;
    color: #5f6368;
}
.detail h3 {
    margin-top: 33px;
    font-size: 13px;
    font-weight: 500;
    line-height: 18px;
}
.body-text {
    margin: 8px -4px 0 0;
    font-size: 13.3px;
    line-height: 19.1px;
}
.preview {
    display: flex;
    align-items: center;
    justify-content: center;
    flex: none;
    height: 188px;
    margin-top: 38px;
    padding-top: 2px;
    background-color: #d8d8d8;
    font-size: 13.2px;
    color: #666;
}
.btn {
    display: flex;
    align-items: center;
    justify-content: center;
    border-radius: 6px;
    background-color: #006cff;
    color: #fff;
    font-size: 13.3px;
    font-weight: 500;
}
.btn .ic {
    fill: #fff;
}
.dismiss {
    margin-top: auto;
    align-self: flex-end;
    width: 95px;
    height: 34px;
    gap: 4px;
}

/* menu over the filters */
.kind-menu {
    position: absolute;
    z-index: 2;
    left: 24px;
    top: 64px;
    width: 164px;
    height: 91px;
    padding-top: 8px;
    border-radius: 8px;
    background-color: #fff;
    box-shadow: 0 2px 8px rgba(0, 0, 0, 0.35);
    font-size: 13.5px;
}
.kind-option {
    display: flex;
    align-items: center;
    height: 37.5px;
    padding-left: 11px;
    gap: 10px;
}
.kind-option .ic {
    fill: #5f6368;
}
.kind-option.on {
    background-color: #d8e7fd;
    border-bottom: 1px solid #bcc4cf;
}

/* messages */
.search-row {
    display: flex;
    align-items: center;
    height: 59px;
    padding: 0 8px 0 7px;
    gap: 7px;
    border-bottom: 2px solid #d4d4d4;
}
.search {
    display: flex;
    align-items: center;
    flex: 1;
    height: 36px;
    padding-left: 13px;
    gap: 9px;
    border: 1px solid #aaa;
    border-radius: 18px;
    font-size: 13px;
    color: #9a9a9a;
}
.search .ic {
    width: 20px;
    height: 20px;
    fill: #5f6368;
}
.new-text {
    width: 81px;
    height: 34px;
}
.chat {
    flex: 1;
    display: flex;
    flex-direction: column;
}
.chat-head {
    display: flex;
    align-items: center;
    height: 59px;
    padding-left: 16px;
    gap: 8px;
    border-bottom: 2px solid #d4d4d4;
    font-size: 19px;
    font-weight: 500;
    color: #252a31;
}
.avatar {
    flex: none;
    width: 38px;
    height: 38px;
    fill: #5f6368;
}
.chat-body {
    flex: 1;
    padding: 20px 16px 0 16px;
}
.chat-date {
    height: 20px;
    line-height: 20px;
    text-align: center;
    font-size: 15.5px;
    color: #555;
}
.msg {
    display: flex;
    align-items: center;
    gap: 8px;
    margin-top: 40px;
}
.msg.out {
    margin-top: 19px;
    justify-content: flex-end;
}
.bubble {
    width: 138px;
    height: 38px;
    padding-left: 11px;
    border-radius: 8px;
    background-color: #e8e8e8;
    font-size: 13.3px;
    line-height: 38px;
    color: #333;
}
.msg.out .bubble {
    background-color: #006cff;
    color: #fff;
}
.msg-time {
    margin-top: 5px;
    padding-left: 46px;
    font-size: 11.5px;
    line-height: 14px;
    color: #777;
}
.msg-time.out {
    padding: 0 46px 0 0;
    text-align: right;
}
.composer {
    display: flex;
    height: 65px;
    padding: 14px 15px 0 15px;
    gap: 10px;
    border-top: 2px solid #dcdcdc;
}
.add-message {
    flex: 1;
    height: 35px;
    padding-left: 15px;
    border: 1px solid #aaa;
    border-radius: 8px;
    font-size: 14px;
    line-height: 33px;
    color: #777;
}
.send {
    width: 87px;
    height: 35px;
    gap: 3px;
    border-radius: 7px;
    font-weight: 400;
}
```
